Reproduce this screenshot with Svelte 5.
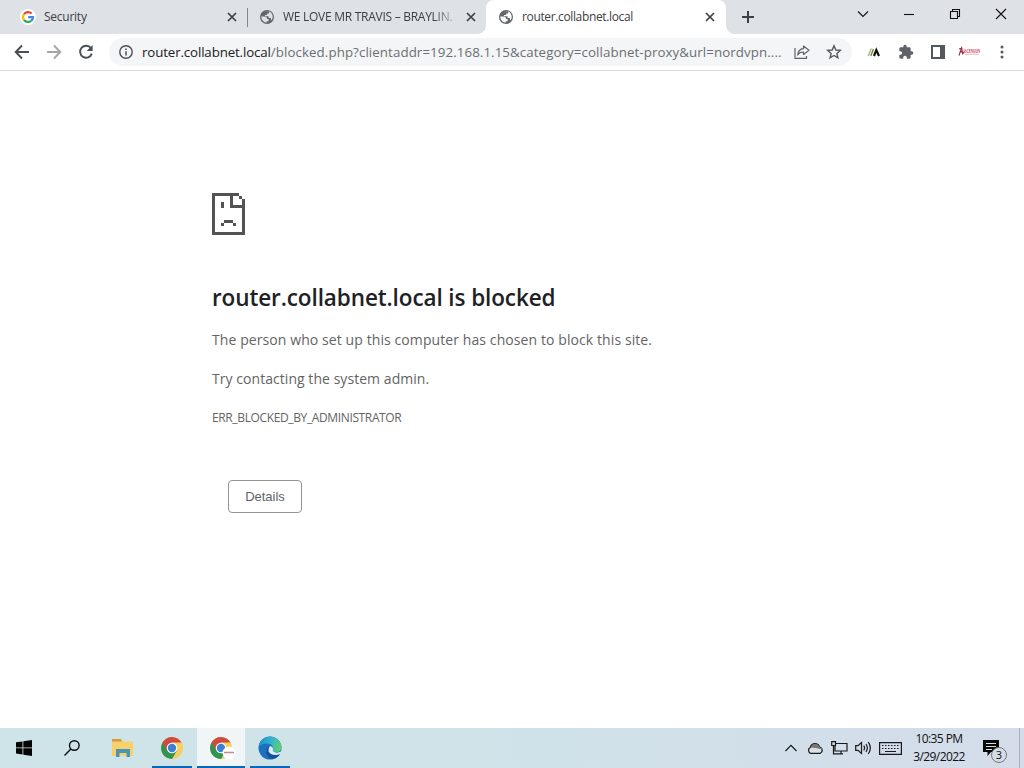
<script lang="ts">
	type Tab = {
		id: string
		title: string
		icon: 'google' | 'globe'
		active?: boolean
	}

	const tabs: Tab[] = [
		{ id: 'security', title: 'Security', icon: 'google' },
		{ id: 'travis', title: 'WE LOVE MR TRAVIS – BRAYLIN.', icon: 'globe' },
		{ id: 'router', title: 'router.collabnet.local', icon: 'globe', active: true },
	]

	const host = 'router.collabnet.local'
	const path = '/blocked.php?clientaddr=192.168.1.15&category=collabnet-proxy&url=nordvpn....'

	const keyColumns = [4, 7, 10, 13, 16, 19]
</script>

{#snippet globe(land: string)}
	<svg width="14" height="14" viewBox="0 0 14 14">
		<circle cx="7" cy="7" r="7" fill="#63676c" />
		<g fill={land}>
			<path d="M1.2 6.6 H4 Q7 6.6 7 9 H8.6 V11.2 H6.6 V12.8 Q1.6 12 1.2 6.6Z" />
			<path d="M5.6 1.5 Q7.6 .8 9.2 1.6 L9 3.6 H7.2 V5 H5 V6.3 H8.6 V8 H10.6 L11.6 10.4 Q14 6.6 11.4 3 L9.6 1.6 Z" />
		</g>
	</svg>
{/snippet}

{#snippet google()}
	<svg width="16" height="16" viewBox="0 0 16 16">
		<circle cx="8" cy="8" r="8" fill="#fff" />
		<g fill="none" stroke-width="2.2">
			<path d="M4 5.1 A5 5 0 0 1 11.6 4.6" stroke="#ea4335" />
			<path d="M4 5.1 A5 5 0 0 0 3.9 10.8" stroke="#fbbc05" />
			<path d="M3.9 10.8 A5 5 0 0 0 11.2 11.8" stroke="#34a853" />
			<path d="M11.2 11.8 A5 5 0 0 0 13 8.1 H8.2" stroke="#4285f4" />
		</g>
	</svg>
{/snippet}

{#snippet chrome()}
	<svg width="24" height="24" viewBox="0 0 24 24">
		<circle cx="12" cy="12" r="11" fill="#f6cf5c" />
		<path d="M12 12 L2.5 6.5 A11 11 0 0 0 12 23 L16.8 14.8Z" fill="#2f9450" />
		<path d="M2.5 6.5 A11 11 0 0 1 21.5 6.6 H12 L7.2 14.6Z" fill="#cf4a40" />
		<circle cx="12" cy="12" r="5.3" fill="#fff" />
		<circle cx="12" cy="12" r="4.2" fill="#3f7fd0" />
	</svg>
{/snippet}

<div class="screen">
	<div class="tab-strip">
		<div class="tabs">
			{#each tabs as tab (tab.id)}
				<div class="tab" class:active={tab.active}>
					<span class="favicon">
						{#if tab.icon === 'google'}
							{@render google()}
						{:else}
							{@render globe(tab.active ? '#fff' : '#dee1e6')}
						{/if}
					</span>
					<span class="title {tab.id}">{tab.title}</span>
					<svg class="close" width="10" height="10" viewBox="0 0 10 10">
						<path d="M1 1 L9 9 M9 1 L1 9" />
					</svg>
				</div>
			{/each}
		</div>
		<div class="new-tab">
			<svg width="12" height="12" viewBox="0 0 12 12"><path d="M6 0 V12 M0 6 H12" stroke="#3c4043" stroke-width="2" /></svg>
		</div>
		<div class="window-controls">
			<span><svg width="12" height="12" viewBox="0 0 12 12"><path d="M1 3.5 L6 8.5 L11 3.5" /></svg></span>
			<span><svg width="12" height="12" viewBox="0 0 12 12"><path d="M1 6.5 H11" /></svg></span>
			<span><svg width="12" height="12" viewBox="0 0 12 12"><path d="M1.5 3.5 H8.5 V10.5 H1.5Z M3.5 3.5 V1.5 H10.5 V8.5 H8.5" /></svg></span>
			<span><svg width="12" height="12" viewBox="0 0 12 12"><path d="M1 1 L11 11 M11 1 L1 11" /></svg></span>
		</div>
	</div>

	<div class="toolbar">
		<span class="tool">
			<svg width="16" height="16" viewBox="0 0 16 16"><path class="stroke" d="M15 8 H2 M8 1.5 L1.7 8 L8 14.5" /></svg>
		</span>
		<span class="tool disabled">
			<svg width="16" height="16" viewBox="0 0 16 16"><path class="stroke" d="M1 8 H14 M8 1.5 L14.3 8 L8 14.5" /></svg>
		</span>
		<span class="tool">
			<svg width="16" height="16" viewBox="0 0 16 16">
				<path class="stroke" d="M13 4.2 A6 6 0 1 0 13.8 9.6" />
				<path d="M14.6 1 V7 H8.6Z" fill="#4b4f54" />
			</svg>
		</span>
		<div class="omnibox">
			<svg class="info" width="14" height="14" viewBox="0 0 14 14">
				<circle cx="7" cy="7" r="6.2" fill="none" stroke="#4b4f54" stroke-width="1.4" />
				<path d="M7 6.2 V10.4 M7 3.4 V5" stroke="#4b4f54" stroke-width="1.5" />
			</svg>
			<span class="url"><span class="host">{host}</span>{path}</span>
			<span class="tool">
				<svg width="16" height="16" viewBox="0 0 16 16">
					<g fill="none" stroke="#5f6368" stroke-width="1.2">
						<path d="M1 4 V14.3 H12.5 V12" />
						<path d="M9.5 2 L15 6.3 L9.5 10.4 V8 Q5.5 7.8 3.7 11 Q4.2 5 9.5 4.6Z" stroke-linejoin="round" />
					</g>
				</svg>
			</span>
			<span class="tool">
				<svg width="16" height="16" viewBox="0 0 16 16">
					<path d="M8 1.8 L9.8 6 L14.3 6.4 L10.9 9.4 L11.9 13.9 L8 11.5 L4.1 13.9 L5.1 9.4 L1.7 6.4 L6.2 6Z" fill="none" stroke="#54585d" stroke-width="1.4" />
				</svg>
			</span>
		</div>
		<span class="tool">
			<svg width="14" height="12" viewBox="0 0 14 12">
				<path d="M1.3 10 L4.2 2.4" stroke="#a3b873" stroke-width="1.4" />
				<path d="M3.8 10 L6.4 3" stroke="#6b7d3c" stroke-width="1.3" />
				<path d="M7 10 L9.3 4 L12 10" fill="none" stroke="#111" stroke-width="2.2" />
			</svg>
		</span>
		<span class="tool">
			<svg width="16" height="16" viewBox="0 0 24 24">
				<path d="M20.5 11H19V7c0-1.1-.9-2-2-2h-4V3.5a2.5 2.5 0 0 0-5 0V5H4c-1.1 0-2 .9-2 2v3.8h1.5a2.7 2.7 0 0 1 0 5.4H2V20c0 1.1.9 2 2 2h3.8v-1.5a2.7 2.7 0 0 1 5.4 0V22H17c1.1 0 2-.9 2-2v-4h1.5a2.5 2.5 0 0 0 0-5Z" fill="#5f6368" />
			</svg>
		</span>
		<span class="tool">
			<svg width="14" height="14" viewBox="0 0 14 14">
				<path d="M1 1 H13 V13 H1Z" fill="#fff" stroke="#54585d" stroke-width="2" />
				<path d="M9 1 H13 V13 H9Z" fill="#54585d" />
			</svg>
		</span>
		<span class="tool profile">
			<svg width="26" height="14" viewBox="-1 0 26 14">
				<path d="M1 10.5 L3.6 3 L4.8 9.5 M1.5 7.5 Q4.5 6 6 8.5 M1 4 L4.5 3" fill="none" stroke="#8e3044" stroke-width="1.1" />
				<path d="M7 9.3 H21" stroke="#eab9c3" stroke-width="1" />
				<text x="5" y="7.5" textLength="17" lengthAdjust="spacingAndGlyphs">ASCENSION</text>
			</svg>
		</span>
		<span class="tool">
			<svg width="4" height="14" viewBox="0 0 4 14" fill="#54585d">
				<circle cx="2" cy="2" r="1.5" /><circle cx="2" cy="7" r="1.5" /><circle cx="2" cy="12" r="1.5" />
			</svg>
		</span>
	</div>

	<main>
		<svg class="sad-page" width="33" height="42" viewBox="0 0 11 14" shape-rendering="crispEdges" fill="#535353">
			<path d="M0 0 H9 V1 H7 V4 H10 V2 H11 V14 H0Z M1 1 V13 H10 V5 H6 V1Z" fill-rule="evenodd" />
			<path d="M9 1 H10 V2 H9Z M3 3 H4 V5 H3Z M4 9 H7 V10 H4Z M3 10 H4 V11 H3Z M7 10 H8 V11 H7Z" />
		</svg>
		<h1>{host} is blocked</h1>
		<p class="reason">The person who set up this computer has chosen to block this site.</p>
		<p class="hint">Try contacting the system admin.</p>
		<div class="code">ERR_BLOCKED_BY_ADMINISTRATOR</div>
		<button>Details</button>
	</main>

	<footer>
		<div class="apps">
			<span class="app">
				<svg width="16" height="16" viewBox="0 0 16 16">
					<path d="M0 2.3 L6.5 1.4 V7.5 H0Z M7.3 1.3 L16 0 V7.5 H7.3Z M0 8.3 H6.5 V14.5 L0 13.6Z M7.3 8.3 H16 V16 L7.3 14.7Z" fill="#050505" />
				</svg>
			</span>
			<span class="app">
				<svg width="16" height="16" viewBox="0 0 16 16" fill="none" stroke="#111" stroke-width="1.4">
					<circle cx="10.3" cy="5.5" r="4.8" /><path d="M6.9 9 L.5 15.5" />
				</svg>
			</span>
			<span class="app explorer">
				<svg width="22" height="18" viewBox="0 0 22 18">
					<path d="M0 0 H9 L11 2.5 H21 V17 H0Z" fill="#f8d06c" />
					<path d="M0 0 H9 L10 2.5 H0Z" fill="#d59c3c" />
					<path d="M4 10 H18 V18 H14.5 V14 H7.5 V18 H4Z" fill="#4a94b5" />
				</svg>
			</span>
			<span class="app running">{@render chrome()}</span>
			<span class="app running current">
				{@render chrome()}
				<svg class="badge" width="14" height="14" viewBox="0 0 14 14">
					<circle cx="7" cy="7" r="6.5" fill="#fff" />
					<path d="M2 6.5 H12" stroke="#c98692" stroke-width="1.5" />
				</svg>
			</span>
			<span class="app running">
				<svg width="24" height="24" viewBox="0 0 24 24">
					<defs>
						<linearGradient id="edge-top" x1="0" x2="1" y1=".3" y2=".5">
							<stop offset="0" stop-color="#1d8fce" /><stop offset=".5" stop-color="#2fb3cf" /><stop offset="1" stop-color="#62cf72" />
						</linearGradient>
					</defs>
					<circle cx="12" cy="12" r="11.5" fill="#1a72bd" />
					<path d="M.6 11 A11.5 11.5 0 0 1 23.5 11 Q23.5 16 18.500 16 Q14 15.800 15 13.200 Q15.500 8 9.500 7.500 Q4 7 .6 11Z" fill="url(#edge-top)" />
					<path d="M10.500 10 Q5.500 17 11.500 22 Q18 24.500 22 18 Q17 20.500 13 17.500 Q9.500 14.500 10.500 10Z" fill="#16529a" />
					<path d="M12 10 Q8.500 15 13 18 Q17.500 20.300 22.200 17.800 L23.500 15.300 Q18.500 17.800 15.500 15.600 Q14.300 14.600 15 13.200 Q15 10.500 12 10Z" fill="#dcecf0" />
				</svg>
			</span>
		</div>

		<div class="tray">
			<span><svg width="12" height="8" viewBox="0 0 12 8"><path d="M.5 7 L6 1.3 L11.5 7" /></svg></span>
			<span>
				<svg width="17" height="13" viewBox="0 0 16 12">
					<path d="M3.5 10.5 A3 3 0 0 1 3 5 Q4.5 1 8.5 1.5 Q11 2 12 4.8 A3 3 0 0 1 12.5 10.5Z" style:fill="#dedfe0" />
					<path d="M3 5 Q5 1 8.5 1.5 Q11 2 12 4.8 Q14 5 15 7 L8 5.5Z" style:fill="#777" style:stroke="none" />
				</svg>
			</span>
			<span>
				<svg width="17" height="14" viewBox="0 0 17 14">
					<path d="M5 2.5 H16 V10 H4 V5 M.7 .7 H4.5 V4.5 H.7Z M2.5 4.5 V12.8 H12 M10 10 V12.8" />
				</svg>
			</span>
			<span>
				<svg width="17" height="14" viewBox="0 0 17 14">
					<path d="M.7 4.7 H3 L6.5 1.5 V12.5 L3 9.3 H.7Z M8.7 4.7 Q10.4 7 8.7 9.3 M11 3 Q13.7 7 11 11 M13.3 1.2 Q17.4 7 13.3 12.8" />
				</svg>
			</span>
			<span class="keyboard">
				<svg width="23" height="13" viewBox="0 0 23 13">
					<path d="M.6 .6 H22.4 V12.4 H.6Z M6 9.5 H17" />
					{#each keyColumns as x (x)}
						<path d="M{x - 1} 3.5 h1.5 M{x - 1} 6.5 h1.5" />
					{/each}
				</svg>
			</span>
			<div class="clock">
				<div class="time">10:35 PM</div>
				<div class="date">3/29/2022</div>
			</div>
			<div class="notifications">
				<svg width="17" height="16" viewBox="0 0 17 16">
					<path d="M0 0 H16 V12 H8 L4.5 16 V12 H0Z" style:fill="#080808" style:stroke="none" />
					<path d="M3 3.5 H13 M3 6.5 H13 M3 9.5 H9" style:stroke="#d5dee8" />
				</svg>
				<span class="count">3</span>
			</div>
			<i class="show-desktop"></i>
		</div>
	</footer>
</div>

<style>
	:global(body) {
		margin: 0;
		overflow: hidden;
	}

	.screen {
		width: 1024px;
		height: 768px;
		display: flex;
		flex-direction: column;
		background: #fff;
		font-family: 'Open Sans', 'Noto Sans', sans-serif;
		color: #3c4043;
	}

	svg {
		display: block;
		flex: none;
	}

	.tab-strip {
		height: 34px;
		flex: none;
		display: flex;
		background: #dee1e6;
	}

	.tabs {
		display: flex;
		padding-left: 8px;
	}

	.tab {
		width: 239px;
		height: 34px;
		box-sizing: border-box;
		padding: 0 10px 0 12px;
		display: flex;
		align-items: center;
		position: relative;
		font-size: 12px;
		letter-spacing: -0.36px;

		.favicon {
			width: 16px;
			display: grid;
			place-items: center;
		}

		.title {
			flex: 1;
			margin: 0 10px 0 8px;
			white-space: nowrap;
			line-height: 18px;

			&.security {
				letter-spacing: -0.25px;
			}

			&.travis {
				letter-spacing: -0.27px;
				mask-image: linear-gradient(to right, #000 150px, transparent 176px);
			}
		}

		.close {
			stroke: #3c4043;
			stroke-width: 1.7;
		}

		&:first-child::after {
			content: '';
			position: absolute;
			right: -1px;
			top: 8px;
			width: 1px;
			height: 19px;
			background: #80868b;
		}

		&.active {
			width: 240px;
			padding-right: 11px;
			background: #fff;
			border-radius: 8px 8px 0 0;

			&::before,
			&::after {
				content: '';
				position: absolute;
				bottom: 0;
				width: 8px;
				height: 8px;
			}

			&::before {
				left: -8px;
				background: radial-gradient(circle at 0 0, transparent 7.5px, #fff 8px);
			}

			&::after {
				right: -8px;
				background: radial-gradient(circle at 100% 0, transparent 7.5px, #fff 8px);
			}
		}
	}

	.new-tab {
		padding: 11px 0 0 16px;
	}

	.window-controls {
		margin-left: auto;
		display: flex;

		span {
			width: 46px;
			height: 28px;
			display: grid;
			place-items: center;
		}

		path {
			fill: none;
			stroke: #111;
			stroke-width: 1.1;
		}
	}

	.toolbar {
		height: 36px;
		flex: none;
		display: flex;
		align-items: center;
		padding: 0 6px;
		border-bottom: 1px solid #d9dbde;
		box-sizing: content-box;
	}

	.tool {
		width: 32px;
		flex: none;
		display: grid;
		place-items: center;

		.stroke {
			fill: none;
			stroke: #4b4f54;
			stroke-width: 1.9;
		}

		&.disabled {
			opacity: 0.5;
		}
	}

	.omnibox {
		width: 743px;
		height: 28px;
		box-sizing: border-box;
		margin: 0 6px 0 7px;
		padding: 0 2px 0 10px;
		display: flex;
		align-items: center;
		border-radius: 14px;
		background: #f3f5f6;
	}

	.url {
		flex: 1;
		margin-left: 9px;
		white-space: nowrap;
		font-size: 13.3px;
		letter-spacing: 0.09px;
		color: #6b6f74;

		.host {
			letter-spacing: -0.13px;
			color: #202124;
		}
	}

	.profile text {
		font: bold 6px 'Liberation Serif', serif;
		fill: #c92543;
	}

	main {
		flex: 1;
		padding: 122px 0 0 212px;
		color: #646464;

		h1 {
			margin: 46px 0 0;
			font-size: 22.5px;
			font-weight: 600;
			line-height: 34px;
			letter-spacing: -0.1px;
			color: #202124;
		}

		p {
			margin: 0;
			font-size: 14px;
			line-height: 24px;
			letter-spacing: 0.09px;
		}

		.reason {
			margin-top: 13px;
		}

		.hint {
			margin-top: 15px;
			letter-spacing: 0.05px;
		}

		.code {
			margin-top: 18px;
			font-size: 12px;
			line-height: 18px;
			letter-spacing: -0.37px;
		}

		button {
			display: block;
			width: 74px;
			height: 33px;
			margin: 53px 0 0 16px;
			padding: 0;
			border: 1px solid #949494;
			border-radius: 4px;
			background: #fff;
			color: #5f6368;
			font: 13px 'Liberation Sans', sans-serif;
		}
	}

	footer {
		height: 40px;
		flex: none;
		display: flex;
		justify-content: space-between;
		background: linear-gradient(to right, #cfe4e9, #cfe3e9 45%, #d3deea 85%, #d4dce9);
	}

	.apps {
		display: flex;
	}

	.app {
		width: 48px;
		margin-right: 1px;
		display: grid;
		place-items: center;
		position: relative;

		&:nth-child(-n + 2) {
			margin-right: 0;
		}

		&.explorer {
			margin-left: 3px;
		}

		&.running::after {
			content: '';
			position: absolute;
			left: 4px;
			right: 4px;
			bottom: 0;
			height: 2px;
			background: #0568b8;
		}

		&.current {
			background: #f0f6f8;

			&::after {
				left: 0;
				right: 0;
			}
		}
	}

	.badge {
		position: absolute;
		left: 25px;
		top: 18px;
	}

	.tray {
		display: flex;
		align-items: center;
		color: #111;

		> span {
			width: 24px;
			display: grid;
			place-items: center;
		}

		> .keyboard {
			width: 31px;
		}

		path {
			fill: none;
			stroke: #191919;
			stroke-width: 1.2;
		}
	}

	.clock {
		width: 66px;
		text-align: center;
		font-size: 12px;
		line-height: 18px;
		letter-spacing: -0.6px;
	}

	.notifications {
		position: relative;
		margin-left: 11px;
		width: 36px;

		.count {
			position: absolute;
			left: 8px;
			top: 7px;
			width: 14px;
			height: 14px;
			border: 1px solid #777;
			border-radius: 50%;
			background: #d4dce6;
			text-align: center;
			font-size: 11px;
			line-height: 14px;
		}
	}

	.show-desktop {
		width: 4px;
		height: 40px;
		border-left: 1px solid #a8b2bd;
	}
</style>
